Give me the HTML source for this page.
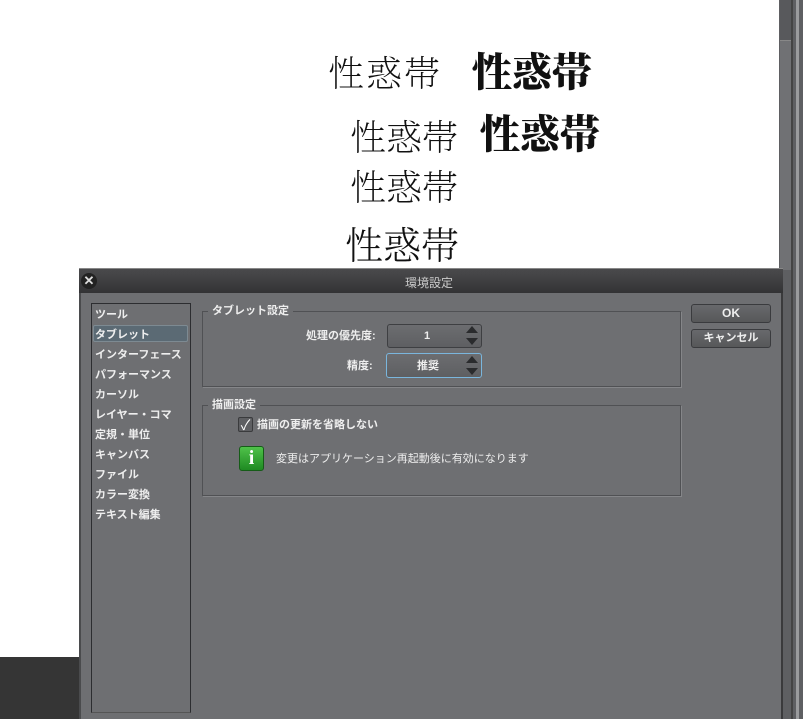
<!DOCTYPE html>
<html><head><meta charset="utf-8"><style>
*{margin:0;padding:0;box-sizing:border-box}
body{width:803px;height:719px;overflow:hidden;background:#fff;position:relative;font-family:"Liberation Sans","Noto Sans CJK JP",sans-serif;}
.a{position:absolute}
.hw{position:absolute;font-family:"Noto Serif CJK SC","Noto Sans CJK JP",serif;color:#111;white-space:nowrap;line-height:1}
.t{position:absolute;font-size:11px;color:#eee;white-space:nowrap;line-height:13px;font-weight:bold}
.sp{position:absolute;border:1px solid #3e3f42;border-radius:3px;background:linear-gradient(#6c6d70,#5e5f62);}
.arr{position:absolute;right:3px;width:0;height:0;border-left:6px solid transparent;border-right:6px solid transparent}
.btn{position:absolute;border:1px solid #3a3b3e;border-radius:3px;background:linear-gradient(#68696c,#575859);color:#eee;font-size:11px;font-weight:bold;text-align:center;line-height:16px}
</style></head><body>
<div class="hw" style="left:328px;top:54px;font-size:36px;font-weight:200;letter-spacing:2px">性惑帯</div>
<div class="hw" style="left:472px;top:50px;font-size:40px;font-weight:900">性惑帯</div>
<div class="hw" style="left:350px;top:118px;font-size:36px;font-weight:200">性惑帯</div>
<div class="hw" style="left:480px;top:112px;font-size:40px;font-weight:900">性惑帯</div>
<div class="hw" style="left:350px;top:168px;font-size:36px;font-weight:200">性惑帯</div>
<div class="hw" style="left:345px;top:224px;font-size:38px;font-weight:300">性惑帯</div>

<div class="a" style="left:779px;top:0;width:24px;height:719px;background:#5e5f62"></div>
<div class="a" style="left:780px;top:0;width:11px;height:40px;background:#58595c"></div>
<div class="a" style="left:780px;top:40px;width:11px;height:230px;background:#707174;border-top:1px solid #888"></div>
<div class="a" style="left:791px;top:0;width:2px;height:719px;background:#444"></div>
<div class="a" style="left:796px;top:0;width:3px;height:719px;background:#9a9b9d"></div>
<div class="a" style="left:0;top:657px;width:79px;height:62px;background:#353535"></div>

<div class="a" style="left:79px;top:268px;width:704px;height:451px;background:#6e6f72;border-left:2px solid #4a4b4d;border-right:2px solid #3a3a3c"></div>
<div class="a" style="left:79px;top:268px;width:704px;height:25px;background:linear-gradient(#4a4a4c,#333335);border-top:1px solid #888"></div>
<div class="a" style="left:81px;top:273px;width:16px;height:16px;border-radius:50%;background:#222;color:#ddd;font-size:13px;line-height:16px;text-align:center;font-weight:bold">✕</div>
<div class="a" style="left:405px;top:274px;font-size:12px;color:#ccc">環境設定</div>

<div class="a" style="left:91px;top:303px;width:100px;height:410px;border:1px solid #2c2d30;border-bottom-color:#555"></div>
<div class="a" style="left:93px;top:325px;width:95px;height:17px;background:#5b6a74;border:1px solid #7d8a92;border-radius:2px"></div>
<div class="t" style="left:95px;top:309px">ツール</div>
<div class="t" style="left:95px;top:329px">タブレット</div>
<div class="t" style="left:95px;top:349px">インターフェース</div>
<div class="t" style="left:95px;top:369px">パフォーマンス</div>
<div class="t" style="left:95px;top:389px">カーソル</div>
<div class="t" style="left:95px;top:409px">レイヤー・コマ</div>
<div class="t" style="left:95px;top:429px">定規・単位</div>
<div class="t" style="left:95px;top:449px">キャンバス</div>
<div class="t" style="left:95px;top:469px">ファイル</div>
<div class="t" style="left:95px;top:489px">カラー変換</div>
<div class="t" style="left:95px;top:509px">テキスト編集</div>

<div class="a" style="left:202px;top:311px;width:479px;height:76px;border:1px solid #505154;box-shadow:1px 1px 0 #858689"></div>
<div class="t" style="left:208px;top:305px;background:#6e6f72;padding:0 4px">タブレット設定</div>
<div class="t" style="left:306px;top:330px">処理の優先度:</div>
<div class="sp" style="left:387px;top:324px;width:95px;height:24px"></div>
<div class="t" style="left:424px;top:330px">1</div>
<div class="arr" style="left:466px;top:326px;border-bottom:7px solid #2a2b2d"></div>
<div class="arr" style="left:466px;top:338px;border-top:7px solid #2a2b2d"></div>
<div class="t" style="left:347px;top:360px">精度:</div>
<div class="sp" style="left:386px;top:353px;width:96px;height:25px;border-color:#7ab6dd"></div>
<div class="t" style="left:417px;top:360px">推奨</div>
<div class="arr" style="left:466px;top:356px;border-bottom:7px solid #2a2b2d"></div>
<div class="arr" style="left:466px;top:368px;border-top:7px solid #2a2b2d"></div>

<div class="a" style="left:202px;top:405px;width:479px;height:91px;border:1px solid #505154;box-shadow:1px 1px 0 #858689"></div>
<div class="t" style="left:208px;top:399px;background:#6e6f72;padding:0 4px">描画設定</div>
<div class="a" style="left:238px;top:417px;width:15px;height:15px;border:1px solid #3a3b3d;border-radius:2px;background:#5e5f62;color:#fff;font-size:14px;line-height:14px;text-align:center">✓</div>
<div class="t" style="left:257px;top:419px">描画の更新を省略しない</div>
<div class="a" style="left:239px;top:446px;width:25px;height:25px;border-radius:3px;background:linear-gradient(#4fc24a,#1f8a22);border:1px solid #165c18;color:#fff;font-family:'Liberation Serif',serif;font-weight:bold;font-size:20px;text-align:center;line-height:23px">i</div>
<div class="t" style="left:276px;top:453px;font-weight:normal">変更はアプリケーション再起動後に有効になります</div>

<div class="btn" style="left:691px;top:304px;width:80px;height:19px;font-size:12px">OK</div>
<div class="btn" style="left:691px;top:329px;width:80px;height:19px">キャンセル</div>
</body></html>
